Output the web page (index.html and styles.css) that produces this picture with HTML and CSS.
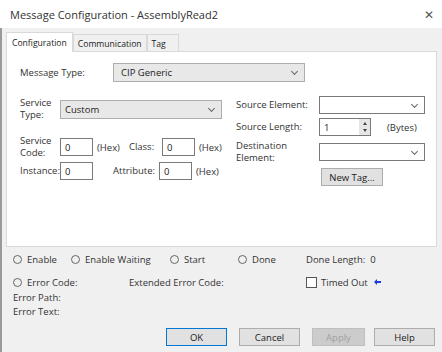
FILE: index.html
```html
<!DOCTYPE html>
<html lang="en">
<head>
    <meta charset="UTF-8">
    <meta name="viewport" content="width=device-width, initial-scale=1.0">
    <title>Message Configuration</title>
    <link rel="stylesheet" href="styles.css">
</head>
<body>
    <div class="window">
        <div class="titlebar">
            <span class="title">Message Configuration - AssemblyRead2</span>
            <span class="close">&#x2715;</span>
        </div>

        <div class="body">
            <div class="tabs">
                <div class="tab active">Configuration</div>
                <div class="tab">Communication</div>
                <div class="tab tab-tag">Tag</div>
            </div>

            <div class="panel">
                <div class="row msg-type">
                    <span class="lbl lbl-msg">Message Type:</span>
                    <div class="select sel-msg">CIP Generic <span class="chev"></span></div>
                </div>

                <div class="columns">
                    <div class="col-left">
                        <div class="row service-type">
                            <span class="lbl lbl-two">Service<br>Type:</span>
                            <div class="select sel-service">Custom <span class="chev"></span></div>
                        </div>
                        <div class="row code-row">
                            <span class="lbl lbl-two">Service<br>Code:</span>
                            <div class="input">0</div>
                            <span class="unit">(Hex)</span>
                            <span class="lbl lbl-class">Class:</span>
                            <div class="input">0</div>
                            <span class="unit">(Hex)</span>
                        </div>
                        <div class="row inst-row">
                            <span class="lbl lbl-inst">Instance:</span>
                            <div class="input">0</div>
                            <span class="lbl lbl-attr">Attribute:</span>
                            <div class="input">0</div>
                            <span class="unit">(Hex)</span>
                        </div>
                    </div>

                    <div class="col-right">
                        <div class="row">
                            <span class="lbl lbl-right">Source Element:</span>
                            <div class="select sel-right"><span class="chev"></span></div>
                        </div>
                        <div class="row">
                            <span class="lbl lbl-right">Source Length:</span>
                            <div class="spin">
                                <span>1</span>
                                <div class="spin-btns">
                                    <span class="up"></span>
                                    <span class="down"></span>
                                </div>
                            </div>
                            <span class="unit bytes">(Bytes)</span>
                        </div>
                        <div class="row">
                            <span class="lbl lbl-right">Destination<br>Element:</span>
                            <div class="select sel-right"><span class="chev"></span></div>
                        </div>
                        <div class="row">
                            <span class="lbl lbl-right"></span>
                            <button class="btn newtag">New Tag...</button>
                        </div>
                    </div>
                </div>
            </div>

            <div class="status">
                <div class="status-row">
                    <span class="flag w-enable"><span class="radio"></span>Enable</span>
                    <span class="flag w-wait"><span class="radio"></span>Enable Waiting</span>
                    <span class="flag w-start"><span class="radio"></span>Start</span>
                    <span class="flag w-done"><span class="radio"></span>Done</span>
                    <span class="flag">Done Length:&nbsp; 0</span>
                </div>
                <div class="status-row row2">
                    <span class="flag w-err"><span class="radio"></span>Error Code:</span>
                    <span class="flag w-ext">Extended Error Code:</span>
                    <span class="flag">
                        <span class="check"></span>Timed Out
                        <svg class="arrow" width="7" height="6" viewBox="0 0 7 6">
                            <path d="M0 3 L3 0 L3 2 L7 2 L7 4 L3 4 L3 6 Z" fill="#1a3fd9"/>
                        </svg>
                    </span>
                </div>
                <div class="err-line first">Error Path:</div>
                <div class="err-line">Error Text:</div>
            </div>

            <div class="buttons">
                <button class="btn dlg default">OK</button>
                <button class="btn dlg">Cancel</button>
                <button class="btn dlg disabled apply">Apply</button>
                <button class="btn dlg">Help</button>
            </div>
        </div>
    </div>
</body>
</html>
```

FILE: styles.css
```css
body {
    margin: 0;
    font-family: 'Open Sans', 'Noto Sans', sans-serif;
    font-size: 9.5px;
    color: #222;
    background: #f0f0f0;
}

.window {
    width: 442px;
    height: 352px;
    overflow: hidden;
    background: #f0f0f0;
}

.titlebar {
    height: 28px;
    background: #fff;
    display: flex;
    align-items: center;
    justify-content: space-between;
    padding: 0 8px 0 10px;
}

.title {
    font-size: 11px;
    color: #333;
}

.close {
    font-size: 12px;
    color: #555;
}

.body {
    border-left: 2px solid #9a9a9a;
    height: 324px;
    box-sizing: border-box;
}

.tabs {
    display: flex;
    padding: 4px 0 0 4px;
    height: 19px;
}

.tab {
    font-size: 8.6px;
    padding: 3px 4px 0;
    background: #f0f0f0;
    border: 1px solid #d9d9d9;
    border-bottom: none;
    margin-left: 0;
    margin-top: 2px;
}

.tab.active {
    background: #fff;
    margin-top: 0;
    padding: 4px 5px 0;
    position: relative;
    z-index: 1;
    margin-bottom: -1px;
}

.tab-tag {
    padding-right: 12px;
}

.panel {
    background: #fff;
    border: 1px solid #d9d9d9;
    margin: 0 5px 0 4px;
    height: 196px;
    box-sizing: border-box;
    padding: 11px 0 0 13px;
}

.row {
    display: flex;
    align-items: center;
}

.lbl {
    color: #333;
    line-height: 12px;
}

.lbl-msg {
    width: 93px;
}

.select {
    height: 19px;
    box-sizing: border-box;
    border: 1px solid #adadad;
    background: #e8e8e8;
    display: flex;
    align-items: center;
    padding-left: 7px;
    position: relative;
}

.sel-msg {
    width: 192px;
}

.chev {
    position: absolute;
    right: 7px;
    top: 5px;
    width: 4px;
    height: 4px;
    border-right: 1px solid #666;
    border-bottom: 1px solid #666;
    transform: rotate(45deg);
}

.columns {
    display: flex;
    margin-top: 15px;
}

.col-left {
    width: 216px;
}

.lbl-two {
    width: 40px;
}

.sel-service {
    width: 162px;
    padding-left: 4px;
}

.code-row {
    margin-top: 14px;
}

.input {
    width: 33px;
    height: 18px;
    box-sizing: border-box;
    border: 1px solid #7a7a7a;
    background: #fff;
    padding-left: 4px;
    display: flex;
    align-items: center;
}

.unit {
    margin-left: 4px;
    color: #333;
}

.lbl-class {
    width: 33px;
    margin-left: 9px;
}

.inst-row {
    margin-top: 3px;
}

.lbl-inst {
    width: 40px;
}

.lbl-attr {
    width: 66px;
    text-align: right;
    padding-right: 4px;
    box-sizing: border-box;
}

.col-right {
    display: flex;
    flex-direction: column;
    gap: 4px;
    margin-top: -1px;
}

.lbl-right {
    width: 83px;
}

.sel-right {
    width: 106px;
    height: 18px;
    background: #fff;
    border-color: #7a7a7a;
}

.spin {
    width: 52px;
    height: 18px;
    box-sizing: border-box;
    border: 1px solid #7a7a7a;
    display: flex;
    align-items: center;
    justify-content: space-between;
    padding-left: 4px;
}

.spin-btns {
    width: 11px;
    height: 16px;
    background: #e6e6e6;
    display: flex;
    flex-direction: column;
    align-items: center;
    justify-content: space-evenly;
}

.up, .down {
    width: 0;
    height: 0;
    border-left: 2.5px solid transparent;
    border-right: 2.5px solid transparent;
}

.up {
    border-bottom: 3px solid #444;
}

.down {
    border-top: 3px solid #444;
}

.bytes {
    margin-left: 16px;
}

.btn {
    font-family: inherit;
    font-size: 9.5px;
    color: #222;
    background: #e1e1e1;
    border: 1px solid #adadad;
    height: 18px;
    padding: 0;
}

.newtag {
    width: 62px;
    margin-left: 2px;
}

.status {
    padding: 5px 0 0 11px;
}

.status-row {
    display: flex;
    align-items: center;
    height: 14px;
}

.row2 {
    margin-top: 9px;
}

.flag {
    display: flex;
    align-items: center;
    color: #333;
}

.radio {
    width: 7px;
    height: 7px;
    border: 1px solid #666;
    border-radius: 50%;
    margin-right: 5px;
}

.w-enable { width: 58px; }
.w-wait { width: 99px; }
.w-start { width: 68px; }
.w-done { width: 68px; }
.w-err { width: 116px; }
.w-ext { width: 177px; }

.check {
    width: 9px;
    height: 9px;
    border: 1px solid #555;
    background: #fff;
    margin-right: 4px;
}

.arrow {
    margin-left: 6px;
}

.err-line {
    line-height: 14px;
    color: #333;
}

.err-line.first {
    margin-top: 2px;
}

.buttons {
    display: flex;
    gap: 12px;
    padding: 9px 0 0 164px;
}

.dlg {
    width: 61px;
}

.default {
    border: 1px solid #0078d7;
}

.disabled {
    color: #a0a0a0;
    background: #cccccc;
    border-color: #bfbfbf;
}

.apply {
    width: 53px;
    margin-right: -3px;
}
```
